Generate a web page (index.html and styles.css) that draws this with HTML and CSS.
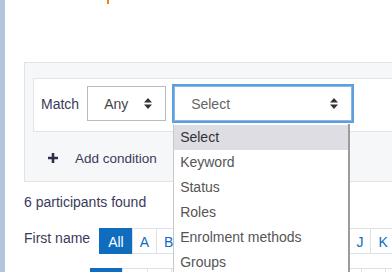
FILE: index.html
```html
<!doctype html>
<html lang="en">
  <head>
    <meta charset="UTF-8" />
    <meta name="viewport" content="width=device-width, initial-scale=1.0" />
    <title>Participants</title>
    <link rel="stylesheet" href="styles.css">
  </head>
  <body>
    <div class="page">
      <div class="rail"></div>
      <main class="content">
        <div class="heading-tail"></div>

        <section class="filters">
          <div class="filter-row">
            <span class="match-label">Match</span>
            <div class="select select-any">
              <span>Any</span>
              <svg class="caret" width="8" height="11" viewBox="0 0 8 11"><path d="M0 4.5L4 0L8 4.5Z M0 6.5L8 6.5L4 11Z" /></svg>
            </div>
            <div class="select-wrap">
              <div class="select select-field is-focused">
                <span>Select</span>
                <svg class="caret" width="8" height="11" viewBox="0 0 8 11"><path d="M0 4.5L4 0L8 4.5Z M0 6.5L8 6.5L4 11Z" /></svg>
              </div>
              <ul class="dropdown">
                <li class="option is-active">Select</li>
                <li class="option">Keyword</li>
                <li class="option">Status</li>
                <li class="option">Roles</li>
                <li class="option">Enrolment methods</li>
                <li class="option">Groups</li>
              </ul>
            </div>
          </div>

          <div class="add-condition">
            <svg class="plus" width="10" height="10" viewBox="0 0 10 10"><path d="M3.7 0H6.3V3.7H10V6.3H6.3V10H3.7V6.3H0V3.7H3.7Z" /></svg>
            <span>Add condition</span>
          </div>
        </section>

        <p class="count">6 participants found</p>

        <div class="initials">
          <span class="initials-label">First name</span>
          <div class="letters">
            <span class="letter is-current">All</span>
            <span class="letter">A</span>
            <span class="letter">B</span>
            <span class="letter">C</span>
            <span class="letter">D</span>
            <span class="letter">E</span>
            <span class="letter">F</span>
            <span class="letter">G</span>
            <span class="letter">H</span>
            <span class="letter">I</span>
            <span class="letter">J</span>
            <span class="letter">K</span>
            <span class="letter">L</span>
          </div>
        </div>

        <div class="initials">
          <span class="initials-label">Surname</span>
          <div class="letters">
            <span class="letter is-current">All</span>
            <span class="letter">A</span>
            <span class="letter">B</span>
            <span class="letter">C</span>
            <span class="letter">D</span>
            <span class="letter">E</span>
            <span class="letter">F</span>
            <span class="letter">G</span>
            <span class="letter">H</span>
            <span class="letter">I</span>
            <span class="letter">J</span>
            <span class="letter">K</span>
            <span class="letter">L</span>
          </div>
        </div>
      </main>
    </div>
  </body>
</html>
```

FILE: styles.css
```css
html,
body {
  margin: 0;
  padding: 0;
  overflow: hidden;
}
body {
  font-family: 'Liberation Sans', Arial, sans-serif;
  font-size: 14px;
  color: #3a3b5a;
  background-color: #fff;
  width: 392px;
  height: 272px;
}
.page {
  display: flex;
  height: 272px;
}
.rail {
  flex: 0 0 5px;
  background-color: #b2c5db;
}
.content {
  flex: 0 0 440px;
  margin-left: 19px;
}
.heading-tail {
  width: 2px;
  height: 4px;
  margin-left: 83px;
  margin-bottom: 58px;
  background-color: #f98012;
}
.filters {
  background-color: #f6f7f9;
  border: 1px solid #e0e3e7;
  padding: 15px 0 11px 8px;
}
.filter-row {
  display: flex;
  align-items: center;
  gap: 8px;
  background-color: #fff;
  border: 1px solid #e2e4e8;
  padding: 7px 7px 10px;
}
.select {
  box-sizing: border-box;
  height: 35px;
  display: flex;
  align-items: center;
  justify-content: space-between;
  padding: 0 13px 0 16px;
  background-color: #fff;
  border: 1px solid #b6bcc4;
  color: #444;
}
.select-any {
  width: 79px;
}
.select-wrap {
  position: relative;
}
.select-field {
  width: 178px;
  color: #666;
}
.is-focused {
  border-color: #8ab8e6;
  box-shadow: 0 0 0 2px #5c9fdc;
}
.caret {
  fill: #333;
}
.dropdown {
  position: absolute;
  top: 38px;
  left: -1px;
  width: 177px;
  box-sizing: border-box;
  margin: 0;
  padding: 1px 0 0;
  list-style: none;
  background-color: #fff;
  border-left: 1px solid #c8c8c8;
  border-right: 2px solid #9c9c9c;
  z-index: 2;
}
.option {
  height: 25px;
  line-height: 25px;
  padding-left: 6px;
  color: #555;
}
.option.is-active {
  background-color: #dedde3;
  color: #333;
}
.add-condition {
  display: flex;
  align-items: center;
  height: 24px;
  margin-top: 14px;
  padding-left: 15px;
  font-size: 13.5px;
}
.plus {
  fill: #2e2f4f;
  margin-right: 17px;
}
.count {
  margin: 10px 0 0;
  line-height: 20px;
}
.initials {
  display: flex;
  align-items: flex-start;
  margin-top: 16px;
}
.initials + .initials {
  margin-top: 14px;
}
.initials-label {
  line-height: 20px;
  margin-right: 9px;
}
.letters {
  display: flex;
}
.letter {
  height: 26px;
  line-height: 26px;
  padding: 0 7px;
  border: 1px solid #dee2e6;
  margin-left: -1px;
  box-sizing: border-box;
  color: #0f6cbf;
}
.letter:first-child {
  margin-left: 0;
}
.letter.is-current {
  padding: 0 8px;
  background-color: #0f6cbf;
  border-color: #0f6cbf;
  color: #fff;
}
```
